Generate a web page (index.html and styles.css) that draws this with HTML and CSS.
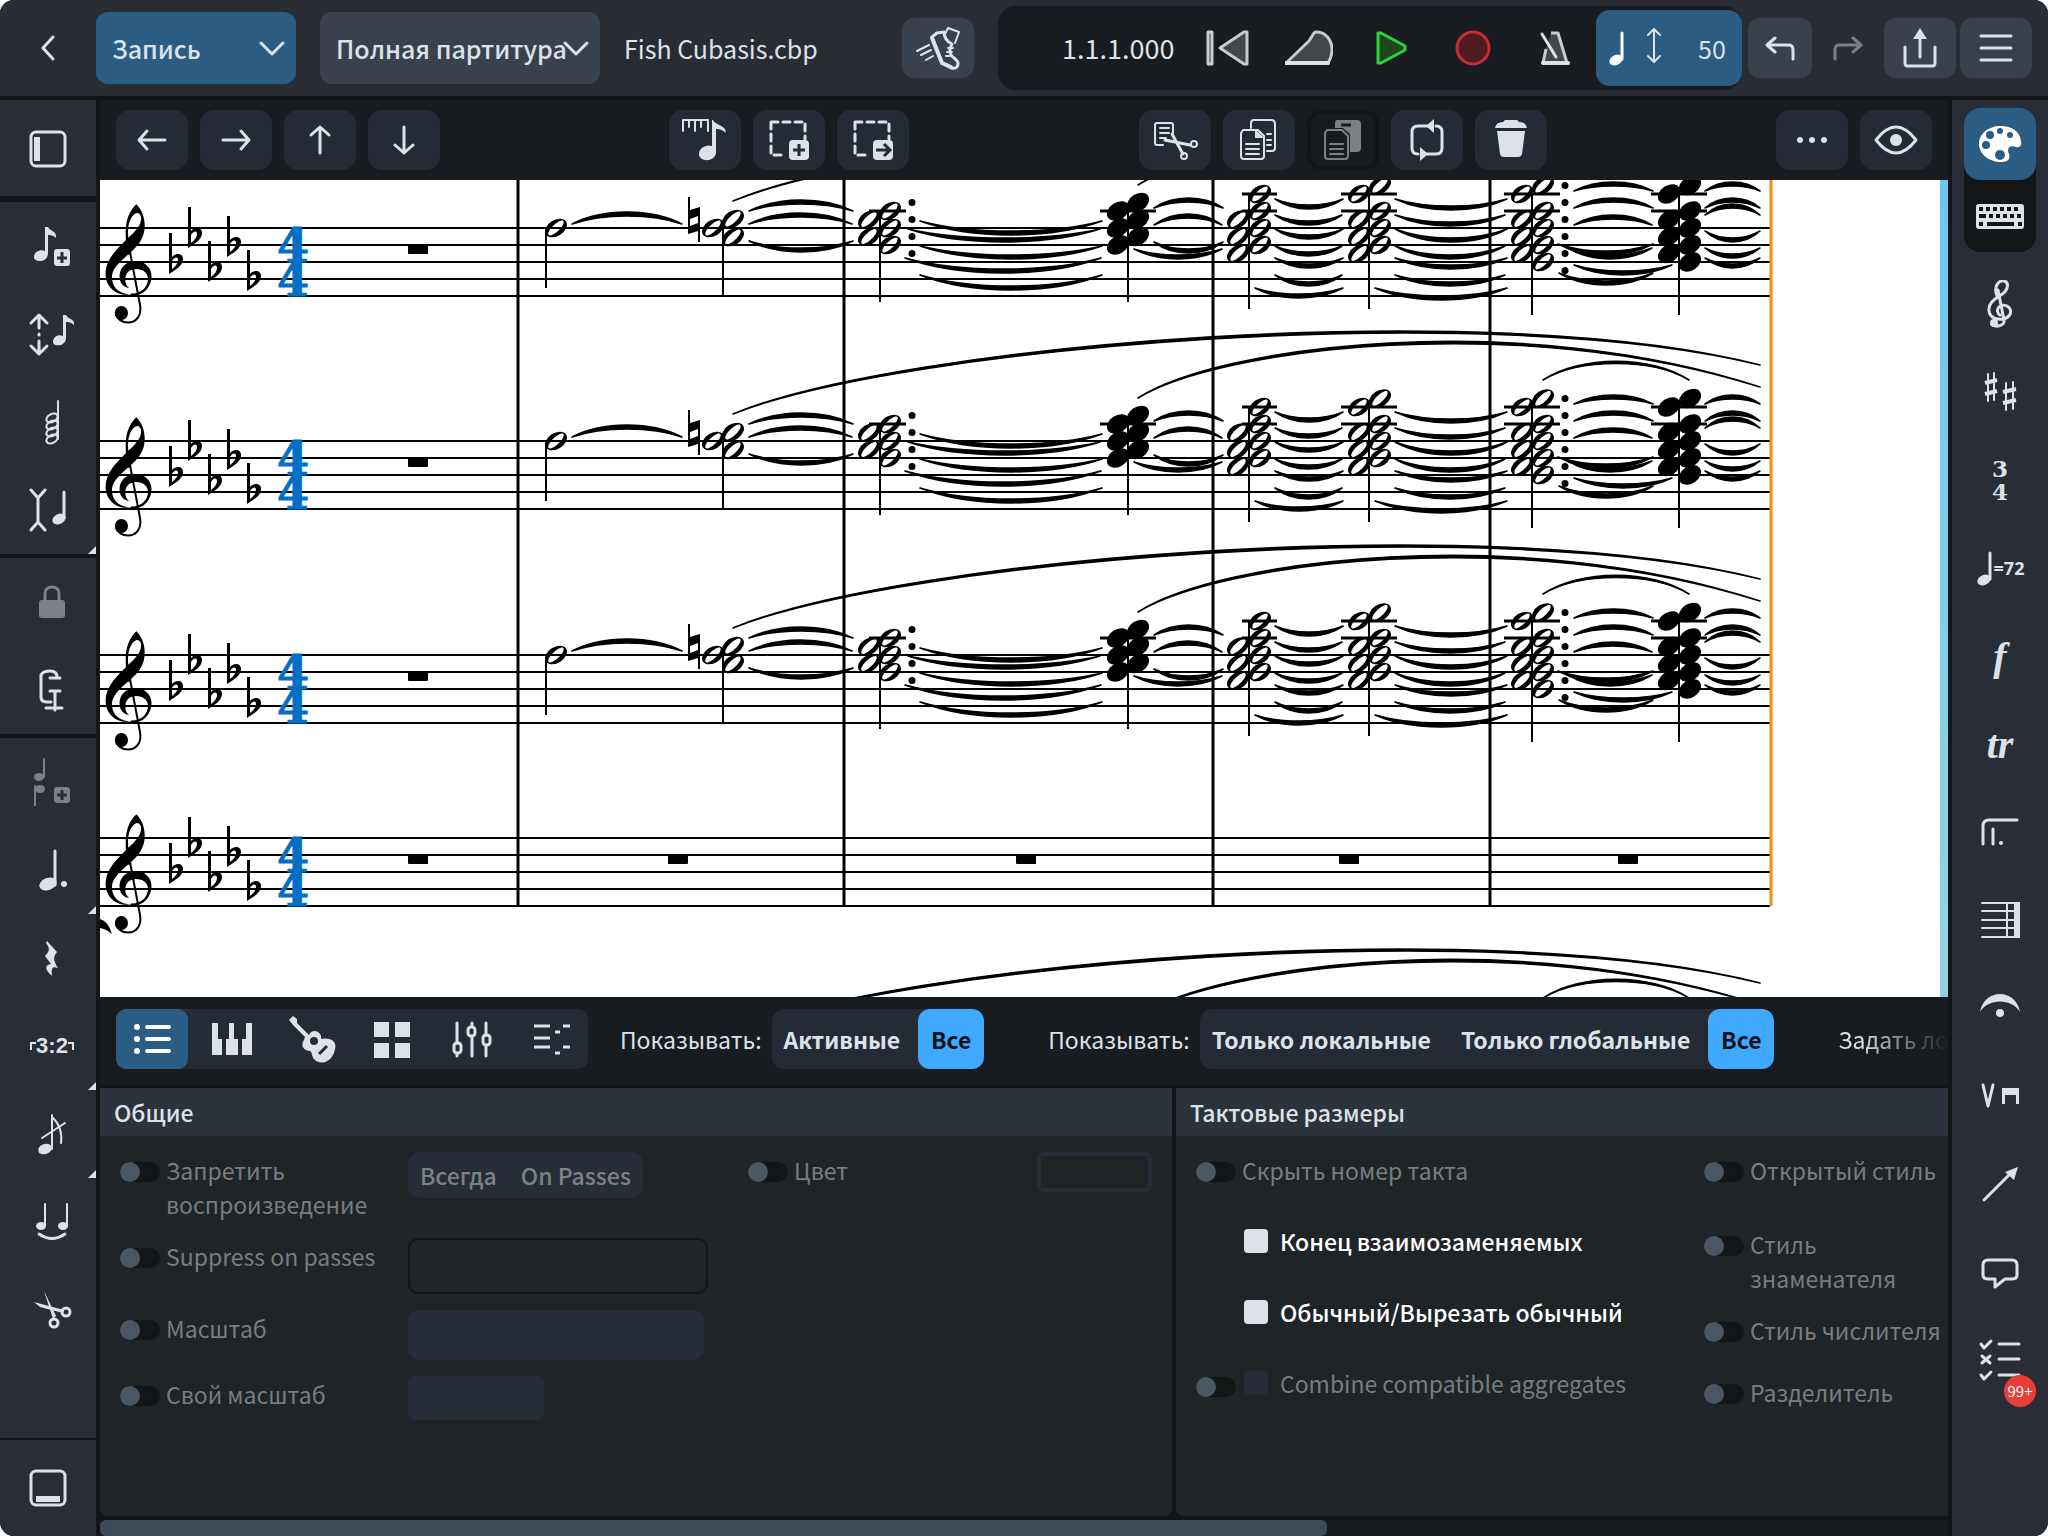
FILE: index.html
```html
<!DOCTYPE html>
<html lang="ru">
<head>
<meta charset="UTF-8">
<title>Fish Cubasis.cbp</title>
<link rel="stylesheet" href="styles.css">
</head>
<body>
<svg class="sprite" aria-hidden="true">
  <symbol id="back" viewBox="0 0 48 48"><path class="s" d="M29 13 19 24l10 11"/></symbol>
  <symbol id="chev" viewBox="0 0 48 48"><path class="s" d="M13 19l11 11 11-11"/></symbol>
  <symbol id="shoe" viewBox="0 0 48 48">
    <path class="s" d="M18 13l5-4 7-1c0 7 4 10 8 12-2 4-3 8-1 11 2 3 7 5 7 8 0 5-3 6-7 5l-9-5z"/>
    <path class="s" d="M18 14l10 25 9 4" stroke-width="4"/>
    <path class="s" d="M31 10l3-6 11 4-4 11M34 24h5M33 28h5M32 32h4" stroke-width="2"/>
    <path class="s" d="M3 27l12-6M7 31l10-5M12 36l7-4" stroke-width="2"/>
  </symbol>
  <symbol id="rewind" viewBox="0 0 48 48"><path class="g" d="M5 8h4v32H5zM41 8h3v32h-3L17 24z"/></symbol>
  <symbol id="ramp" viewBox="0 0 48 48"><path class="g" d="M1 39 24 17 29 9Q30 8 32 8c9 0 15 9 15 17 0 6-2 11-4 14z"/><path class="s" d="M1 39h42" stroke-width="4"/></symbol>
  <symbol id="play" viewBox="0 0 48 48"><path d="M11 9h3l24 13v4L14 39h-3z" fill="#1c4620" stroke="#2fd13a" stroke-width="3" stroke-linejoin="round"/></symbol>
  <symbol id="rec" viewBox="0 0 48 48"><circle cx="24" cy="24" r="16" fill="#4f1c20" stroke="#c62c33" stroke-width="3"/></symbol>
  <symbol id="metro" viewBox="0 0 48 48"><path class="g" d="M20 9h7l9 30H12L15 25"/><path class="s" d="M12 39h25" stroke-width="4"/><path class="s" d="M11 10l14 23"/></symbol>
  <symbol id="note" viewBox="0 0 48 48"><ellipse class="f" cx="20" cy="36" rx="7" ry="5" transform="rotate(-25 20 36)"/><path class="s" d="M26 9v26" stroke-width="3"/></symbol>
  <symbol id="updown" viewBox="0 0 48 48"><path class="s" d="M24 6v31M18 11l6-6 6 6M18 32l6 6 6-6" stroke-width="2"/></symbol>
  <symbol id="undo" viewBox="0 0 48 48"><path class="s" d="M19 14l-8 7 8 7M11 21h22q4 0 4 5v9"/></symbol>
  <symbol id="redo" viewBox="0 0 48 48"><path class="s" d="M29 14l8 7-8 7M37 21H15q-4 0-4 5v9"/></symbol>
  <symbol id="share" viewBox="0 0 48 48"><path class="s" d="M9 23v16q0 3 3 3h24q3 0 3-3V23M24 33V10"/><path class="f" d="M24 4l7 11H17z"/></symbol>
  <symbol id="menu" viewBox="0 0 48 48"><path class="s" d="M9 12h30M9 24h30M9 36h30"/></symbol>

  <symbol id="left" viewBox="0 0 48 48"><path class="s" d="M19 15l-8 9 8 9M11 24h26"/></symbol>
  <symbol id="right" viewBox="0 0 48 48"><path class="s" d="M29 15l8 9-8 9M37 24H11"/></symbol>
  <symbol id="up" viewBox="0 0 48 48"><path class="s" d="M15 19l9-8 9 8M24 11v26"/></symbol>
  <symbol id="down" viewBox="0 0 48 48"><path class="s" d="M15 29l9 8 9-8M24 37V11"/></symbol>
  <symbol id="ruler" viewBox="0 0 48 48"><path class="s" d="M2 15V4h25v11M8 4v7M14 4v11M20 4v7" stroke-width="2"/><path class="f" d="M32 4c2 5 13 5 13 13-4-4-8-4-10-4v20c2 14-17 14-17 5 0-6 7-10 13-8V4z"/></symbol>
  <symbol id="seladd" viewBox="0 0 48 48"><path class="s" d="M6 6h34v17M6 6v33h13" stroke-dasharray="7 5"/><rect class="f" x="24" y="24" width="20" height="20" rx="4"/><path d="M34 28v12M28 34h12" stroke="#252b35" stroke-width="3"/></symbol>
  <symbol id="selnext" viewBox="0 0 48 48"><path class="s" d="M6 6h34v17M6 6v33h13" stroke-dasharray="7 5"/><rect class="f" x="24" y="24" width="20" height="20" rx="4"/><path d="M27 34h13M35 28l6 6-6 6" fill="none" stroke="#252b35" stroke-width="3"/></symbol>
  <symbol id="cut" viewBox="0 0 48 48"><path class="s" d="M12 29H6q-2 0-2-2V9q0-2 2-2h14q2 0 2 2v8M9 12h9M9 17h9M9 22h6" stroke-width="2"/><path class="s" d="M21 18l11 20M14 24l25 5" stroke-width="3"/><circle class="s" cx="33" cy="40" r="3" stroke-width="2"/><circle class="s" cx="43" cy="28" r="3" stroke-width="2"/></symbol>
  <symbol id="copy" viewBox="0 0 48 48"><path class="s" d="M16 12V7q0-3 3-3h17q4 0 4 4v24q0 3-3 3h-5M32 18h4M32 24h4M32 29h4" stroke-width="2"/><path class="s" d="M8 14h15l6 6v20q0 3-3 3H9q-3 0-3-3V17zM11 28h13M11 33h13M11 38h13" stroke-width="2"/><path class="f" d="M20 13l9 9h-9z"/></symbol>
  <symbol id="paste" viewBox="0 0 48 48"><path class="f" d="M18 4h20q4 0 4 4v24q0 4-4 4h-7V18l-7-6h-8V8q0-4 2-4z"/><path d="M22 9h10" stroke="#181b1f" stroke-width="3"/><path class="s" d="M8 14h15l6 6v20q0 3-3 3H9q-3 0-3-3V17zM11 28h13M11 33h13M11 38h13" stroke-width="2"/></symbol>
  <symbol id="loop" viewBox="0 0 48 48"><path class="s" d="M15 38q-6 0-6-6V16q0-6 6-6h12M33 10q6 0 6 6v16q0 6-6 6H21"/><path class="f" d="M31 3v14l-8-7zM17 31v14l8-7z"/></symbol>
  <symbol id="trash" viewBox="0 0 48 48"><path class="f" d="M8 12q1-6 8-6l2-2h12l2 2q7 0 8 6zM10 15h28l-3 23q-1 3-4 3H17q-3 0-4-3z"/></symbol>
  <symbol id="dots" viewBox="0 0 48 48"><circle class="f" cx="12" cy="24" r="3"/><circle class="f" cx="24" cy="24" r="3"/><circle class="f" cx="36" cy="24" r="3"/></symbol>
  <symbol id="eye" viewBox="0 0 48 48"><path class="s" d="M4 24Q14 11 24 11t20 13Q34 37 24 37T4 24z"/><circle class="f" cx="24" cy="24" r="6"/></symbol>

  <symbol id="sidebar" viewBox="0 0 48 48"><rect class="s" x="7" y="8" width="34" height="34" rx="5"/><path class="s" d="M13 13v24" stroke-width="6" stroke-linecap="butt"/></symbol>
  <symbol id="bottom" viewBox="0 0 48 48"><rect class="s" x="7" y="7" width="34" height="34" rx="5"/><path class="s" d="M12 35h24" stroke-width="6" stroke-linecap="butt"/></symbol>
  <symbol id="noteadd" viewBox="0 0 48 48"><path class="f" d="M17 5h3c2 4 8 4 8 9v2c-3-3-6-3-8-3v18c0 10-14 10-14 4 0-5 6-8 11-6z"/><rect class="f" x="26" y="27" width="16" height="17" rx="3"/><path d="M34 30v11M29 36h10" stroke="#292d35" stroke-width="3"/></symbol>
  <symbol id="pitch" viewBox="0 0 48 48"><path class="s" d="M3 13l8-8 8 8M11 6v12M3 36l8 8 8-8M11 43V31M11 24v1" stroke-width="3"/><path class="f" d="M35 5h3c2 4 8 4 8 8v2c-3-3-6-3-8-3v16c0 9-13 9-13 4 0-5 5-8 10-6z"/></symbol>
  <symbol id="cluster" viewBox="0 0 48 48"><path class="s" d="M30 3v38" stroke-width="2"/><ellipse class="s" cx="24" cy="20" rx="6" ry="4" transform="rotate(-30 24 20)" stroke-width="2"/><ellipse class="s" cx="24" cy="27" rx="6" ry="4" transform="rotate(-30 24 27)" stroke-width="2"/><ellipse class="s" cx="24" cy="34" rx="6" ry="4" transform="rotate(-30 24 34)" stroke-width="2"/><ellipse class="s" cx="24" cy="41" rx="6" ry="4" transform="rotate(-30 24 41)" stroke-width="2"/></symbol>
  <symbol id="caret" viewBox="0 0 48 48"><path class="s" d="M3 4l7 8 7-8M10 12v24M3 44l7-8 7 8"/><path class="s" d="M36 6v26"/><ellipse class="f" cx="31" cy="33" rx="7" ry="5" transform="rotate(-25 31 33)"/></symbol>
  <symbol id="lock" viewBox="0 0 48 48"><rect class="f" x="11" y="22" width="26" height="18" rx="3"/><path class="s" d="M17 22v-6q0-7 7-7t7 7v6"/></symbol>
  <symbol id="clamp" viewBox="0 0 48 48"><path class="s" d="M29 11q0-6-7-6t-9 4v22q0 5 6 5h4M22 12h10M22 25h10M27 25v19M18 42h16"/></symbol>
  <symbol id="voice" viewBox="0 0 48 48"><path class="s" d="M16 1v18M7 28v20" stroke-width="2"/><ellipse class="f" cx="11" cy="19" rx="5" ry="4"/><ellipse class="f" cx="12" cy="31" rx="5" ry="4"/><rect class="f" x="26" y="29" width="16" height="16" rx="3"/><path d="M34 32v10M29 37h10" stroke="#292d35" stroke-width="3"/></symbol>
  <symbol id="dotted" viewBox="0 0 48 48"><path class="s" d="M27 5v34"/><ellipse class="f" cx="20" cy="38" rx="9" ry="6" transform="rotate(-20 20 38)"/><circle class="f" cx="36" cy="38" r="3"/></symbol>
  <symbol id="rest" viewBox="0 0 48 48"><path class="f" d="M19 7l10 11c-4 5-4 8 1 16-5-2-7-1-6 8-7-6-8-11-1-12l-6-8c5-5 5-8 1-13z"/></symbol>
  <symbol id="grace" viewBox="0 0 48 48"><path class="s" d="M24 5v34M24 7q11 10 9 26M14 28l23-15" stroke-width="2"/><ellipse class="f" cx="17" cy="39" rx="7" ry="5" transform="rotate(-20 17 39)"/></symbol>
  <symbol id="tie" viewBox="0 0 48 48"><path class="s" d="M17 6v21M39 6v21" stroke-width="2"/><ellipse class="f" cx="13" cy="28" rx="5" ry="4"/><ellipse class="f" cx="35" cy="28" rx="5" ry="4"/><path class="s" d="M11 36q13 9 26 0" stroke-width="3"/></symbol>
  <symbol id="scissors" viewBox="0 0 48 48"><path class="f" d="M16 5l12 25-3 3zM6 16l30 8-1 3-23-6z"/><circle class="s" cx="26" cy="37" r="4"/><circle class="s" cx="38" cy="26" r="4"/></symbol>

  <symbol id="palette" viewBox="0 0 48 48"><path class="f" d="M25 6C12 6 3 14 3 24s10 18 22 18c9 0 9-5 8-8-3-7 2-9 7-7 4 1 6-2 5-6C44 11 35 6 25 6z"/><g fill="#2a5c84"><circle cx="10" cy="25" r="4"/><circle cx="14" cy="15" r="4"/><circle cx="24" cy="11" r="3"/><circle cx="34" cy="15" r="3"/><circle cx="24" cy="35" r="5"/></g></symbol>
  <symbol id="kbd" viewBox="0 0 48 48"><rect class="f" x="0" y="12" width="48" height="25" rx="3"/><g stroke="#131517" stroke-width="4" fill="none"><path d="M3 17h42" stroke-dasharray="4 3"/><path d="M3 24h42" stroke-dasharray="7 3 4 3 4 3 4 3 4 3"/><path d="M3 32h4M11 32h27M42 32h4"/></g></symbol>
  <symbol id="clef" viewBox="0 -26 56 124">
    <path class="f" d="M44.700-3C45 10 38 18 30 25 18 35 11 42 12 51c1 11 10 15.300 19 15.300C18 69 5.600 60 5.600 46 5.600 33 14 24 24 14 32 6 40 0 41-8c.5-4-1-7-4-7-5 1-9 9-9 19 0 6 1 13 3 22l-2.500 1C26 18 25.500 10 25.700 3 26-9 30-18 36.400-23.700 42-18 44.500-11 44.700-3z"/>
    <path class="f" d="M30 67.500C43 69 51.500 59 51.500 48 51.500 39 44 33 35 33c-9 0-15.500 7-15.500 15 0 7 3.500 11 9.500 12-3-3-3.700-5-3.700-8.500C25.300 45 30 41 36 41c7 0 12 4 12 10 0 8-7 15-17 14.500z"/>
    <path d="M30 24l10 53c2 11-4 17.500-12 17.500-6 0-11-3.500-12-8.500" fill="none" stroke="currentColor" stroke-width="2"/>
    <ellipse class="f" cx="21.400" cy="85" rx="6.600" ry="7"/>
  </symbol>
  <symbol id="gclef" viewBox="0 0 48 48"><path class="s" d="M21 16C17 6 23 0 28 1s5 9-3 14-13 9-12 16 8 9 14 8 9-6 7-10-8-5-11-2-1 7 1 8M22 10l6 30c1 6-9 8-12 4"/><circle class="f" cx="18" cy="43" r="4"/></symbol>
  <symbol id="sharps" viewBox="0 0 48 48"><path class="s" d="M12 6v27M18 5v27M30 15v27M37 14v27" stroke-width="2"/><path class="s" d="M9 15l12-3M9 26l12-3M27 24l13-3M27 35l13-3" stroke-width="4" stroke-linecap="butt"/></symbol>
  <symbol id="octave" viewBox="0 0 48 48"><path class="s" d="M7 36V18q0-6 6-6h28M17 21v15"/><circle class="f" cx="25" cy="35" r="2"/></symbol>
  <symbol id="barline" viewBox="0 0 48 48"><path class="s" d="M6 7h37M6 15h37M6 24h37M6 32h37M6 41h37M31 7v34" stroke-width="2"/><path class="f" d="M38 6h6v36h-6z"/></symbol>
  <symbol id="fermata" viewBox="0 0 48 48"><path class="f" d="M4 28C8 4 40 4 44 28 36 14 12 14 4 28z"/><circle class="f" cx="24" cy="29" r="4"/></symbol>
  <symbol id="bow" viewBox="0 0 48 48"><path class="s" d="M7 13l5 21 5-21"/><path class="f" d="M26 16h17v16h-3v-9H29v9h-3z"/></symbol>
  <symbol id="line" viewBox="0 0 48 48"><path class="s" d="M8 40l25-25"/><path class="f" d="M42 7l-4 13-9-8z"/></symbol>
  <symbol id="comment" viewBox="0 0 48 48"><path class="s" d="M12 12h24q5 0 5 5v10q0 4-5 4h-7l-10 8v-8h-7q-5 0-5-4V17q0-5 5-5z"/></symbol>
  <symbol id="check" viewBox="0 0 48 48"><path class="s" d="M5 8l3 4 7-7M6 20l8 7M14 20l-8 7M5 39l3 4 7-7"/><path class="s" d="M23 8h20M23 23h20M23 39h20"/></symbol>

  <symbol id="list" viewBox="0 0 48 48"><path class="s" d="M19 12h22M19 24h22M19 36h22" stroke-width="4"/><circle class="f" cx="9" cy="12" r="3"/><circle class="f" cx="9" cy="24" r="3"/><circle class="f" cx="9" cy="36" r="3"/></symbol>
  <symbol id="keys" viewBox="0 0 48 48"><path class="f" d="M4 8h6v16h4v16H4zM21 8h5v16h4v16H18V24h3zM38 8h6v32H34V24h4z"/></symbol>
  <symbol id="guitar" viewBox="0 0 48 48"><path class="f" d="M1 5l4-4 4 3v4l12 12c2-5 8-5 11-1 2 2 0 4 2 5 10-2 15 4 13 10-1 6-4 10-8 12-4 3-10 1-12-1-4-3-2-7-5-9-8-1-9-7-6-11l1-3L5 10z"/><circle cx="26" cy="26" r="4" fill="#252b35"/><path d="M31 39l8-8" stroke="#252b35" stroke-width="3"/></symbol>
  <symbol id="pads" viewBox="0 0 48 48"><path class="f" d="M6 7h15v15H6zM27 7h15v15H27zM6 28h15v15H6zM27 28h15v15H27z"/></symbol>
  <symbol id="faders" viewBox="0 0 48 48"><path class="s" d="M9 8v20M9 38v3M24 8v3M24 21v20M38 8v12M38 30v11"/><rect class="s" x="6" y="28" width="7" height="10" rx="3"/><rect class="s" x="20" y="12" width="7" height="9" rx="3"/><rect class="s" x="35" y="20" width="7" height="10" rx="3"/></symbol>
  <symbol id="steps" viewBox="0 0 48 48"><path class="s" d="M6 11h16M6 23h16M6 32h16M35 11h7M35 32h7M27 17h5M27 38h5" stroke-linecap="butt"/></symbol>
</svg>

<div class="app">
  <header class="topbar">
    <button class="back" aria-label="Назад"><svg class="icon"><use href="#back"/></svg></button>
    <div class="dropdown mode">
      <select aria-label="Режим"><option>Запись</option></select>
      <svg class="icon"><use href="#chev"/></svg>
    </div>
    <div class="dropdown layout">
      <select aria-label="Партитура"><option>Полная партитура</option></select>
      <svg class="icon"><use href="#chev"/></svg>
    </div>
    <h1 class="filename">Fish Cubasis.cbp</h1>
    <button class="square shoe" aria-label="Прогон"><svg class="icon"><use href="#shoe"/></svg></button>
    <div class="transport">
      <output class="time">1.1.1.000</output>
      <button aria-label="В начало"><svg class="icon"><use href="#rewind"/></svg></button>
      <button aria-label="Перемотка"><svg class="icon"><use href="#ramp"/></svg></button>
      <button aria-label="Играть"><svg class="icon"><use href="#play"/></svg></button>
      <button aria-label="Писать"><svg class="icon"><use href="#rec"/></svg></button>
      <button aria-label="Метроном"><svg class="icon"><use href="#metro"/></svg></button>
      <button class="tempo" aria-label="Темп 50">
        <svg class="icon"><use href="#note"/></svg>
        <svg class="icon thin"><use href="#updown"/></svg>
        <span>50</span>
      </button>
    </div>
    <button class="square undo" aria-label="Отменить"><svg class="icon"><use href="#undo"/></svg></button>
    <button class="redo" aria-label="Повторить" disabled><svg class="icon"><use href="#redo"/></svg></button>
    <button class="square" aria-label="Поделиться"><svg class="icon"><use href="#share"/></svg></button>
    <button class="square menu" aria-label="Меню"><svg class="icon"><use href="#menu"/></svg></button>
  </header>

  <div class="work">
    <nav class="side left">
      <div class="group head"><button aria-label="Панель"><svg class="icon"><use href="#sidebar"/></svg></button></div>
      <div class="group">
        <button aria-label="Вставка нот"><svg class="icon"><use href="#noteadd"/></svg></button>
        <button aria-label="Высота"><svg class="icon"><use href="#pitch"/></svg></button>
        <button aria-label="Аккорд"><svg class="icon"><use href="#cluster"/></svg></button>
        <button class="more" aria-label="Вставка"><svg class="icon"><use href="#caret"/></svg></button>
      </div>
      <div class="group">
        <button class="off" aria-label="Блокировка"><svg class="icon"><use href="#lock"/></svg></button>
        <button aria-label="Зажим"><svg class="icon"><use href="#clamp"/></svg></button>
      </div>
      <div class="group grow">
        <button class="off" aria-label="Голос"><svg class="icon"><use href="#voice"/></svg></button>
        <button class="more" aria-label="Точка"><svg class="icon"><use href="#dotted"/></svg></button>
        <button aria-label="Пауза"><svg class="icon"><use href="#rest"/></svg></button>
        <button class="more tuplet" aria-label="Туплет"><i></i>3:2<i></i></button>
        <button class="more" aria-label="Форшлаг"><svg class="icon"><use href="#grace"/></svg></button>
        <button aria-label="Лига"><svg class="icon"><use href="#tie"/></svg></button>
        <button aria-label="Ножницы"><svg class="icon"><use href="#scissors"/></svg></button>
      </div>
      <div class="group foot"><button aria-label="Нижняя панель"><svg class="icon"><use href="#bottom"/></svg></button></div>
    </nav>

    <main class="center">
      <div class="tools">
        <div>
          <button aria-label="Влево"><svg class="icon"><use href="#left"/></svg></button>
          <button aria-label="Вправо"><svg class="icon"><use href="#right"/></svg></button>
          <button aria-label="Вверх"><svg class="icon"><use href="#up"/></svg></button>
          <button aria-label="Вниз"><svg class="icon"><use href="#down"/></svg></button>
        </div>
        <div>
          <button aria-label="Сетка"><svg class="icon"><use href="#ruler"/></svg></button>
          <button aria-label="Добавить к выделению"><svg class="icon"><use href="#seladd"/></svg></button>
          <button aria-label="Выделить дальше"><svg class="icon"><use href="#selnext"/></svg></button>
        </div>
        <div>
          <button aria-label="Вырезать"><svg class="icon"><use href="#cut"/></svg></button>
          <button aria-label="Копировать"><svg class="icon"><use href="#copy"/></svg></button>
          <button aria-label="Вставить" disabled><svg class="icon"><use href="#paste"/></svg></button>
          <button aria-label="Повтор"><svg class="icon"><use href="#loop"/></svg></button>
          <button aria-label="Удалить"><svg class="icon"><use href="#trash"/></svg></button>
        </div>
        <div>
          <button aria-label="Ещё"><svg class="icon"><use href="#dots"/></svg></button>
          <button aria-label="Вид"><svg class="icon"><use href="#eye"/></svg></button>
        </div>
      </div>

      <div class="score"><svg id="score"></svg></div>

      <div class="panelbar">
        <div class="views">
          <button class="on" aria-label="Свойства"><svg class="icon"><use href="#list"/></svg></button>
          <button aria-label="Клавиатура"><svg class="icon"><use href="#keys"/></svg></button>
          <button aria-label="Гитара"><svg class="icon"><use href="#guitar"/></svg></button>
          <button aria-label="Пэды"><svg class="icon"><use href="#pads"/></svg></button>
          <button aria-label="Микшер"><svg class="icon"><use href="#faders"/></svg></button>
          <button aria-label="Редактор"><svg class="icon"><use href="#steps"/></svg></button>
        </div>
        <span class="cap">Показывать:</span>
        <div class="seg"><button>Активные</button><button class="on">Все</button></div>
        <span class="cap second">Показывать:</span>
        <div class="seg"><button>Только локальные</button><button>Только глобальные</button><button class="on">Все</button></div>
        <span class="fade">Задать ло</span>
      </div>

      <div class="panels">
        <section class="panel general">
          <h2>Общие</h2>
          <div class="fields">
            <div class="col props">
              <label><input type="checkbox" class="toggle">Запретить воспроизведение</label>
              <div class="seg small"><button disabled>Всегда</button><button disabled>On Passes</button></div>
              <label><input type="checkbox" class="toggle">Suppress on passes</label>
              <input type="text" class="box outline" aria-label="Suppress on passes" disabled>
              <label><input type="checkbox" class="toggle">Масштаб</label>
              <select class="box" aria-label="Масштаб" disabled></select>
              <label><input type="checkbox" class="toggle">Свой масштаб</label>
              <input type="text" class="box short" aria-label="Свой масштаб" disabled>
            </div>
            <div class="col colour">
              <label><input type="checkbox" class="toggle">Цвет</label>
              <button class="swatch" aria-label="Цвет" disabled></button>
            </div>
          </div>
        </section>
        <section class="panel meter">
          <h2>Тактовые размеры</h2>
          <div class="fields">
            <div class="col checks">
              <label><input type="checkbox" class="toggle">Скрыть номер такта</label>
              <label class="live"><input type="checkbox" class="tick">Конец взаимозаменяемых</label>
              <label class="live"><input type="checkbox" class="tick">Обычный/Вырезать обычный</label>
              <div class="pair">
                <input type="checkbox" class="toggle" aria-label="Combine">
                <label><input type="checkbox" class="tick" disabled>Combine compatible aggregates</label>
              </div>
            </div>
            <div class="col styles">
              <label class="r1"><input type="checkbox" class="toggle">Открытый стиль</label>
              <label class="r2"><input type="checkbox" class="toggle"><span>Стиль<br>знаменателя</span></label>
              <label class="r3"><input type="checkbox" class="toggle">Стиль числителя</label>
              <label><input type="checkbox" class="toggle">Разделитель</label>
            </div>
          </div>
        </section>
      </div>
      <div class="scroll"><div class="thumb"></div></div>
    </main>

    <nav class="side right">
      <div class="pill">
        <button class="on" aria-label="Палитра"><svg class="icon"><use href="#palette"/></svg></button>
        <button aria-label="Клавиши"><svg class="icon"><use href="#kbd"/></svg></button>
      </div>
      <button aria-label="Ключи"><svg class="icon"><use href="#gclef"/></svg></button>
      <button aria-label="Тональность"><svg class="icon"><use href="#sharps"/></svg></button>
      <button class="meter-btn" aria-label="Размер"><span>3</span><span>4</span></button>
      <button class="tempo-btn" aria-label="Темп"><svg class="icon"><use href="#note"/></svg><span>=72</span></button>
      <button class="serif" aria-label="Динамика">f</button>
      <button class="serif" aria-label="Орнаменты">tr</button>
      <button aria-label="Октавы"><svg class="icon"><use href="#octave"/></svg></button>
      <button aria-label="Тактовые черты"><svg class="icon"><use href="#barline"/></svg></button>
      <button aria-label="Фермата"><svg class="icon"><use href="#fermata"/></svg></button>
      <button aria-label="Штрихи"><svg class="icon"><use href="#bow"/></svg></button>
      <button aria-label="Линии"><svg class="icon"><use href="#line"/></svg></button>
      <button aria-label="Комментарии"><svg class="icon"><use href="#comment"/></svg></button>
      <button class="todo" aria-label="Проверка"><svg class="icon"><use href="#check"/></svg><b class="badge">99+</b></button>
    </nav>
  </div>
</div>
<script src="score.js"></script>
</body>
</html>
```

FILE: styles.css
```css
* {
  box-sizing: border-box;
}
body {
  margin: 0;
  background: #fff;
  color: #dde2e8;
  font-family: "Noto Sans CJK SC", "Noto Sans", sans-serif;
  font-size: 23px;
  line-height: 34px;
}
button, select, input {
  font: inherit;
  color: inherit;
  border: 0;
  margin: 0;
  padding: 0;
  background: none;
}
button {
  display: flex;
  align-items: center;
  justify-content: center;
}
.sprite {
  position: absolute;
  width: 0;
  height: 0;
}
.icon {
  width: 48px;
  height: 48px;
  flex: none;
  overflow: visible;
}
.f { fill: currentColor; }
.s {
  fill: none;
  stroke: currentColor;
  stroke-width: 3px;
  stroke-linecap: round;
  stroke-linejoin: round;
}
.s[stroke-width="2"] { stroke-width: 2px; }
.s[stroke-width="4"] { stroke-width: 4px; }
.s[stroke-width="6"] { stroke-width: 6px; }
.s[stroke-linecap="butt"] { stroke-linecap: butt; }
.g {
  fill: #43474c;
  stroke: #c9cbce;
  stroke-width: 3px;
  stroke-linejoin: round;
}

.app {
  display: flex;
  flex-direction: column;
  height: 100vh;
  border-radius: 14px;
  overflow: hidden;
  background: #181b1f;
}

/* top bar */
.topbar {
  display: flex;
  align-items: center;
  flex: none;
  height: 100px;
  padding-right: 16px;
  background: #292d33;
  border-bottom: 4px solid #131517;
  font-size: 25px;
}
.back {
  width: 96px;
  height: 72px;
}
.dropdown {
  display: flex;
  align-items: center;
  height: 72px;
  border-radius: 12px;
  background: #38414c;
}
.dropdown select {
  appearance: none;
  width: 100%;
  height: 72px;
  padding-left: 16px;
  font-weight: 500;
  outline: 0;
}
.dropdown .icon {
  margin-left: -48px;
  pointer-events: none;
}
.mode {
  width: 200px;
  background: #2a5c84;
}
.layout {
  width: 280px;
  margin-left: 24px;
}
.filename {
  margin: 0 auto 0 24px;
  font-size: 25px;
  font-weight: 400;
}
.square {
  width: 72px;
  height: 60px;
  border-radius: 12px;
  background: #38414c;
}
.shoe { margin-right: 24px; }
.undo {
  width: 64px;
  margin-left: 6px;
}
.redo {
  width: 72px;
  color: #7d8184;
}
.menu { margin-left: 4px; }
.transport {
  display: flex;
  align-items: center;
  height: 84px;
  padding-left: 64px;
  border-radius: 18px;
  background: #181b1f;
}
.time {
  width: 124px;
  font-size: 27px;
}
.transport button {
  width: 82px;
  height: 76px;
}
.transport .tempo {
  width: 146px;
  border-radius: 14px;
  background: #2a5c84;
  justify-content: flex-start;
}
.tempo .thin { margin-left: -14px; }
.tempo span { margin-left: 20px; }
.tempo .icon:first-child { color: #fff; }

.work {
  display: flex;
  flex: 1;
  min-height: 0;
}

/* side bars */
.side {
  display: flex;
  flex-direction: column;
  flex: none;
  width: 100px;
  background: #292d35;
}
.side.left { border-right: 4px solid #131517; }
.side.right {
  border-left: 4px solid #131517;
  padding-top: 8px;
}
.side button {
  flex: none;
  width: 96px;
  height: 88px;
}
.group { border-bottom: 4px solid #131517; }
.left .group button {
  position: relative;
  padding-left: 8px;
}
.left .head button, .left .foot button {
  height: 96px;
  padding-left: 0;
}
.head { border-bottom-width: 6px; }
.grow {
  flex: 1;
  border-bottom-width: 2px;
}
.foot { border-bottom: 0; }
.more::after {
  content: "";
  position: absolute;
  right: 0;
  bottom: 0;
  border: 4px solid transparent;
  border-right-color: #dde2e8;
  border-bottom-color: #dde2e8;
}
.off { color: #7d8087; }
.left .tuplet {
  font: bold 22px "Liberation Sans", sans-serif;
}
.tuplet i {
  width: 6px;
  height: 8px;
  border: solid #dde2e8;
  border-width: 2px 0 0 2px;
}
.tuplet i:last-child { border-width: 2px 2px 0 0; }
.pill {
  width: 72px;
  margin: 0 12px 8px;
  border-radius: 16px;
  background: #131517;
}
.right .pill button {
  width: 72px;
  height: 72px;
}
.pill .on {
  border-radius: 16px;
  background: #2a5c84;
  color: #fff;
}
.right .meter-btn {
  flex-direction: column;
  font: bold 23px/23px "DejaVu Serif", serif;
}
.tempo-btn .icon { margin-left: -12px; }
.tempo-btn span {
  margin-left: -18px;
  font: bold 18px "Open Sans", sans-serif;
}
.right .serif {
  font: italic bold 40px "Liberation Serif", serif;
}
.todo { position: relative; }
.badge {
  position: absolute;
  left: 52px;
  top: 59px;
  width: 32px;
  height: 32px;
  border-radius: 16px;
  background: #e93e35;
  color: #fff;
  font-size: 15px;
  font-weight: 400;
  line-height: 32px;
}

/* center */
.center {
  display: flex;
  flex-direction: column;
  flex: 1;
  min-width: 0;
}
.tools {
  display: flex;
  justify-content: space-between;
  padding: 10px 16px;
}
.tools div {
  display: flex;
  gap: 12px;
}
.tools button {
  width: 72px;
  height: 60px;
  border-radius: 14px;
  background: #252b35;
}
.tools button:disabled {
  background: #181b1f;
  border: 4px solid #131517;
  color: #7d8184;
}
.score {
  flex: 1;
  min-height: 0;
  overflow: hidden;
  background: linear-gradient(#6cc7f0, #94d2e2) right / 8px 100% no-repeat #fff;
}
.score svg {
  display: block;
  width: 100%;
  height: 100%;
  color: #000;
}
.digit {
  font: bold 46px "DejaVu Serif", serif;
  fill: #006fc4;
  stroke: #006fc4;
  stroke-width: 1px;
}

/* panel switcher */
.panelbar {
  display: flex;
  align-items: center;
  flex: none;
  height: 91px;
  padding: 0 0 4px 16px;
  border-bottom: 3px solid #131517;
  white-space: nowrap;
  overflow: hidden;
}
.views {
  display: flex;
  gap: 8px;
  border-radius: 10px;
  background: #252b35;
}
.views button {
  width: 72px;
  height: 60px;
}
.views .on {
  border-radius: 10px;
  background: #2a5c84;
  color: #fff;
}
.cap { margin: 0 10px 0 32px; }
.second { margin-left: 64px; }
.fade {
  margin-left: 64px;
  mask-image: linear-gradient(90deg, #000 20%, transparent);
}
.seg {
  display: flex;
  border-radius: 12px;
  background: #252b35;
}
.seg button {
  height: 60px;
  padding: 0 12px;
  font-weight: 500;
}
.panelbar .seg button {
  padding-right: 18px;
  font-weight: 700;
}
.panelbar .seg .on {
  width: 66px;
  padding: 0;
  border-radius: 12px;
  background: #3fa9ff;
  color: #0c1116;
}

/* property panels */
.panels {
  display: flex;
  flex: none;
  gap: 4px;
  height: 432px;
  background: #131517;
  border-bottom: 4px solid #131517;
}
.panel {
  min-width: 0;
  border-radius: 0 0 8px 8px;
  background: #1f2427;
  color: #787d80;
  overflow: hidden;
}
.general { flex: 1072; }
.meter {
  flex: 772;
  border-bottom-right-radius: 0;
}
.panel h2 {
  height: 48px;
  margin: 0;
  padding: 0 14px;
  background: #2c333b;
  color: #dde2e8;
  font-size: 23px;
  font-weight: 500;
  line-height: 48px;
}
.fields {
  display: flex;
  padding: 16px 20px;
}
.col label {
  display: flex;
  align-items: flex-start;
  padding-top: 1px;
}
.toggle, .tick {
  appearance: none;
  flex: none;
}
.toggle {
  display: flex;
  width: 40px;
  height: 20px;
  margin: 9px 6px 0 0;
  border-radius: 10px;
  background: #131517;
}
.toggle::before {
  content: "";
  width: 20px;
  height: 20px;
  border-radius: 10px;
  background: #4b5762;
}
.props {
  display: grid;
  grid-template-columns: 288px 300px;
  align-items: start;
  row-gap: 16px;
}
.props label:first-child { height: 70px; }
.small {
  justify-self: start;
  background: #262d37;
}
.small button {
  height: 46px;
  color: #7d8184;
}
.box {
  appearance: none;
  width: 296px;
  height: 50px;
  border-radius: 10px;
  background: #262d37;
  opacity: 1;
}
.outline {
  width: 300px;
  height: 56px;
  border: 2px solid #131517;
  background: none;
}
.short {
  width: 136px;
  height: 44px;
  border-radius: 6px;
}
.colour {
  display: flex;
  flex: 1;
  justify-content: space-between;
  align-items: flex-start;
  margin-left: 40px;
}
.swatch {
  width: 115px;
  height: 40px;
  border: 4px solid #262d37;
  border-radius: 6px;
}
.checks {
  display: flex;
  flex-direction: column;
  flex: none;
  width: 508px;
  gap: 36px;
}
.tick {
  width: 24px;
  height: 24px;
  margin: 5px 12px 0 0;
  border-radius: 4px;
  background: #dde2e8;
}
.tick:disabled { background: #262d37; }
.live {
  margin-left: 48px;
  color: #fff;
  font-weight: 500;
}
.pair { display: flex; }
.pair .toggle {
  margin-top: 12px;
  margin-right: 8px;
}
.styles {
  display: flex;
  flex-direction: column;
  flex: none;
  gap: 16px;
  white-space: nowrap;
}
.r1 { height: 58px; }
.r2 { height: 70px; }
.r3 { height: 46px; }

.scroll {
  flex: none;
  height: 16px;
}
.thumb {
  width: 66.4%;
  height: 16px;
  border-radius: 6px;
  background: #3e4b57;
}
```

FILE: score.js
```js
// staff space is 17px, so one step is 8.5px; y = 0 is the top line of a staff
const STEP = 8.5;
const RIGHT = 1670;

// x, stem end, filled, left heads, right heads, ledgers, dots (in steps)
const chords = [
  { left: 769, right: 790, stem: 780, end: 74, l: [-1, 1], r: [-2, 0, 2], ledger: [-2], from: 769, to: 806, dot: 812, dots: [-3, -1, 1, 3] },
  { left: 1018, right: 1038, stem: 1028, end: 74, black: true, l: [-2, 0, 2], r: [-3, -1, 1], ledger: [-2], from: 1000, to: 1056 },
  { left: 1138, right: 1160, stem: 1149, end: 81, l: [-1, 1, 3], r: [-4, -2, 0, 2], ledger: [-4, -2], from: 1142, to: 1177 },
  { left: 1259, right: 1280, stem: 1269, end: 81, l: [-4, -1, 1, 3], r: [-5, -2, 0, 2], ledger: [-4, -2], from: 1241, to: 1297 },
  { left: 1422, right: 1443, stem: 1432, end: 87, l: [-4, -1, 1, 3], r: [-5, -2, 0, 2, 4], ledger: [-4, -2], from: 1404, to: 1460, dot: 1465, dots: [-5, -3, -1, 1, 3, 5] },
  { left: 1569, right: 1590, stem: 1579, end: 87, black: true, l: [-4, -1, 1, 3], r: [-5, -2, 0, 2, 4], ledger: [-4, -2], from: 1551, to: 1607 }
];

// x1, x2, y, y of the middle
const ties = [
  [472, 582, -4, -14],
  [649, 753, -17, -26], [649, 752, -4, -13], [649, 753, 13, 22],
  [820, 1002, -7, 5], [808, 1000, 1, 12], [820, 1002, 18, 29], [805, 1001, 30, 43], [820, 1002, 47, 60],
  [1054, 1123, -20, -28], [1054, 1122, -3, -12], [1054, 1123, 14, 23], [1034, 1122, 21, 29],
  [1175, 1243, -29, -21], [1175, 1242, -13, -5], [1175, 1243, 1, 9], [1175, 1242, 18, 26], [1175, 1243, 30, 38], [1175, 1242, 47, 56], [1155, 1243, 60, 68],
  [1295, 1407, -29, -20], [1295, 1405, -13, -4], [1295, 1407, 1, 12], [1295, 1405, 18, 29], [1295, 1407, 30, 39], [1295, 1405, 47, 56], [1275, 1407, 60, 70],
  [1474, 1553, -37, -44], [1474, 1553, -20, -28], [1474, 1552, -3, -11], [1458, 1553, 16, 25], [1468, 1552, 20, 29], [1474, 1572, 37, 45], [1459, 1553, 45, 55],
  [1605, 1660, -37, -44], [1605, 1660, -20, -28], [1605, 1660, -13, -22], [1605, 1660, 3, 12], [1605, 1660, 20, 28], [1605, 1660, 30, 38]
];

function head(x, y, black) {
  if (black) return `<ellipse cx="${x}" cy="${y}" rx="12" ry="8.500" transform="rotate(-33 ${x} ${y})"/>`;
  return `<g transform="translate(${x} ${y}) rotate(-33)"><path fill-rule="evenodd" d="M-12 0a12 8 0 1 0 24 0a12 8 0 1 0-24 0M-10 2C-8 6 10 3 10-2C8-6-10-3-10 2z"/></g>`;
}
function line(x1, y1, x2, y2, w) {
  return `<path d="M${x1} ${y1}L${x2} ${y2}" stroke="#000" stroke-width="${w}"/>`;
}
function tie(t) {
  const [x1, x2, y, mid] = t;
  const q = (x2 - x1) * 0.28;
  const c = y + (mid - y) / 0.75;
  return `<path stroke="#000" stroke-width="1.600" stroke-linejoin="round" d="M${x1} ${y}C${x1 + q} ${c - 2.5} ${x2 - q} ${c - 2.5} ${x2} ${y}C${x2 - q} ${c + 2.5} ${x1 + q} ${c + 2.5} ${x1} ${y}z"/>`;
}
function slur(x1, y1, ax, ay, bx, by, x2, y2) {
  return `<path stroke="#000" stroke-width="1.600" stroke-linejoin="round" d="M${x1} ${y1}C${ax} ${ay - 1} ${bx} ${by - 1} ${x2} ${y2}C${bx} ${by + 2} ${ax} ${ay + 2} ${x1} ${y1}z"/>`;
}
function rest(x) {
  return `<rect x="${x - 10}" y="17" width="20" height="9" rx="1"/>`;
}

function staff() {
  let s = "";
  for (let i = 0; i < 5; i++) s += line(0, i * 17, RIGHT, i * 17, 2);
  s += `<use href="#clef" x="0" y="-26" width="56" height="124"/>`;
  [[69, 5], [88, -21], [108, 13], [127, -12], [147, 22]].forEach(([x, y]) => {
    s += `<path fill-rule="evenodd" transform="translate(${x} ${y})" d="M0 0h3v24C8 19 14 21 14 26C14 33 6 37 0 41zM3 28v8C7 33 9 30 9 27C9 23 5 24 3 28z"/>`;
  });
  s += `<text class="digit" x="193" y="34" text-anchor="middle">4</text><text class="digit" x="193" y="68" text-anchor="middle">4</text>`;
  return s + rest(318);
}

function music() {
  let s = head(456, 0) + line(446, 2, 446, 60, 2);
  s += `<path fill-rule="evenodd" d="M588-31h2v13l10-3v35h-2V3l-10 3zM590-9v7l8-3v-7z"/>`;
  s += head(613, 0) + head(633, -9) + head(633, 9) + line(623, -4, 623, 68, 2);
  chords.forEach(c => {
    c.l.forEach(n => s += head(c.left, n * STEP, c.black));
    c.r.forEach(n => s += head(c.right, n * STEP, c.black));
    c.ledger.forEach(n => s += line(c.from, n * STEP, c.to, n * STEP, 3));
    (c.dots || []).forEach(n => s += `<circle cx="${c.dot}" cy="${n * STEP}" r="3.500"/>`);
    s += line(c.stem, c.ledger[0] * STEP, c.stem, c.end, 2);
  });
  ties.forEach(t => s += tie(t));
  s += slur(633, -27, 800, -96, 1390, -145, 1660, -76);
  s += slur(1038, -43, 1120, -95, 1420, -132, 1660, -54);
  s += slur(1443, -61, 1480, -85, 1552, -85, 1589, -61);
  return s;
}

const tops = [48, 261, 475, 658];
let out = `<defs><g id="staff">${staff()}</g><g id="music">${music()}</g></defs>`;
tops.forEach(y => out += `<use href="#staff" y="${y}"/>`);
tops.slice(0, 3).forEach(y => out += `<use href="#music" y="${y}"/>`);
out += `<use href="#music" y="879"/>`;
out += `<g transform="translate(0 658)">${[578, 926, 1249, 1528].map(rest).join("")}</g>`;
[418, 744, 1113, 1390].forEach(x => out += line(x, 0, x, 726, 3));
out += `<path d="M0 739q8 2 12 15q-6-5-12-6z"/>`;
out += `<path d="M1671 0V726" stroke="#f58a14" stroke-width="3"/>`;
document.getElementById("score").innerHTML = out;
```
